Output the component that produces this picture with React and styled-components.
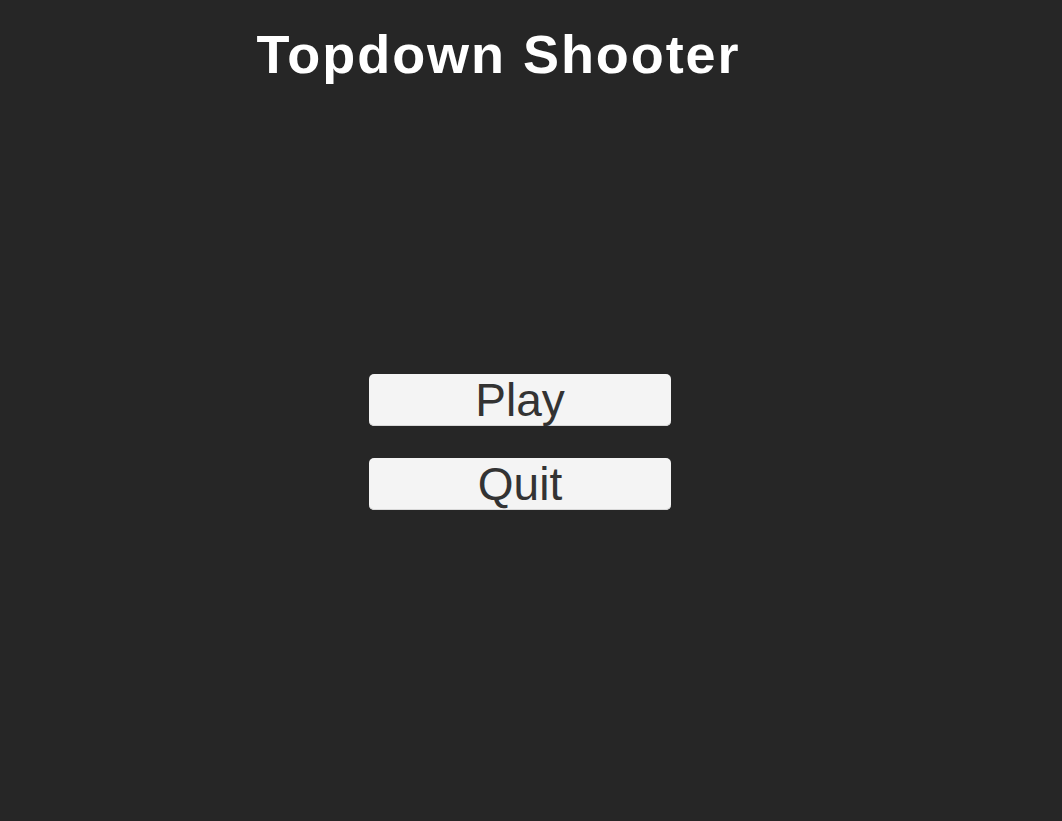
import React from "react";
import styled, { createGlobalStyle } from "styled-components";

const Global = createGlobalStyle`
  html, body { margin: 0; padding: 0; background: #262626; }
  body { font-family: "Liberation Sans", Arial, sans-serif; }
`;

const Screen = styled.div`
  width: 1062px;
  height: 821px;
  background: #262626;
  display: flex;
  flex-direction: column;
  overflow: hidden;
`;

const Header = styled.header`
  display: flex;
  justify-content: center;
  padding: 19px 65px 0 0;
`;

const Title = styled.h1`
  margin: 0;
  font-family: "Liberation Sans", Arial, sans-serif;
  font-weight: 700;
  font-size: 54px;
  line-height: 70px;
  letter-spacing: 1.95px;
  color: #ffffff;
`;

const Menu = styled.nav`
  display: flex;
  flex-direction: column;
  align-items: center;
  gap: 32px;
  padding: 285px 22px 0 0;
`;

const MenuButton = styled.button`
  width: 302px;
  height: 52px;
  border: none;
  border-radius: 5px;
  background: #f4f4f4;
  box-shadow: inset 0 -1px 0 #d8d8d8;
  color: #333333;
  font-family: "Liberation Sans", Arial, sans-serif;
  font-size: 46px;
  line-height: 52px;
  padding: 0;
  cursor: pointer;
`;

export default function App() {
  return (
    <>
      <Global />
      <Screen>
        <Header>
          <Title>Topdown Shooter</Title>
        </Header>
        <Menu>
          <MenuButton>Play</MenuButton>
          <MenuButton>Quit</MenuButton>
        </Menu>
      </Screen>
    </>
  );
}
